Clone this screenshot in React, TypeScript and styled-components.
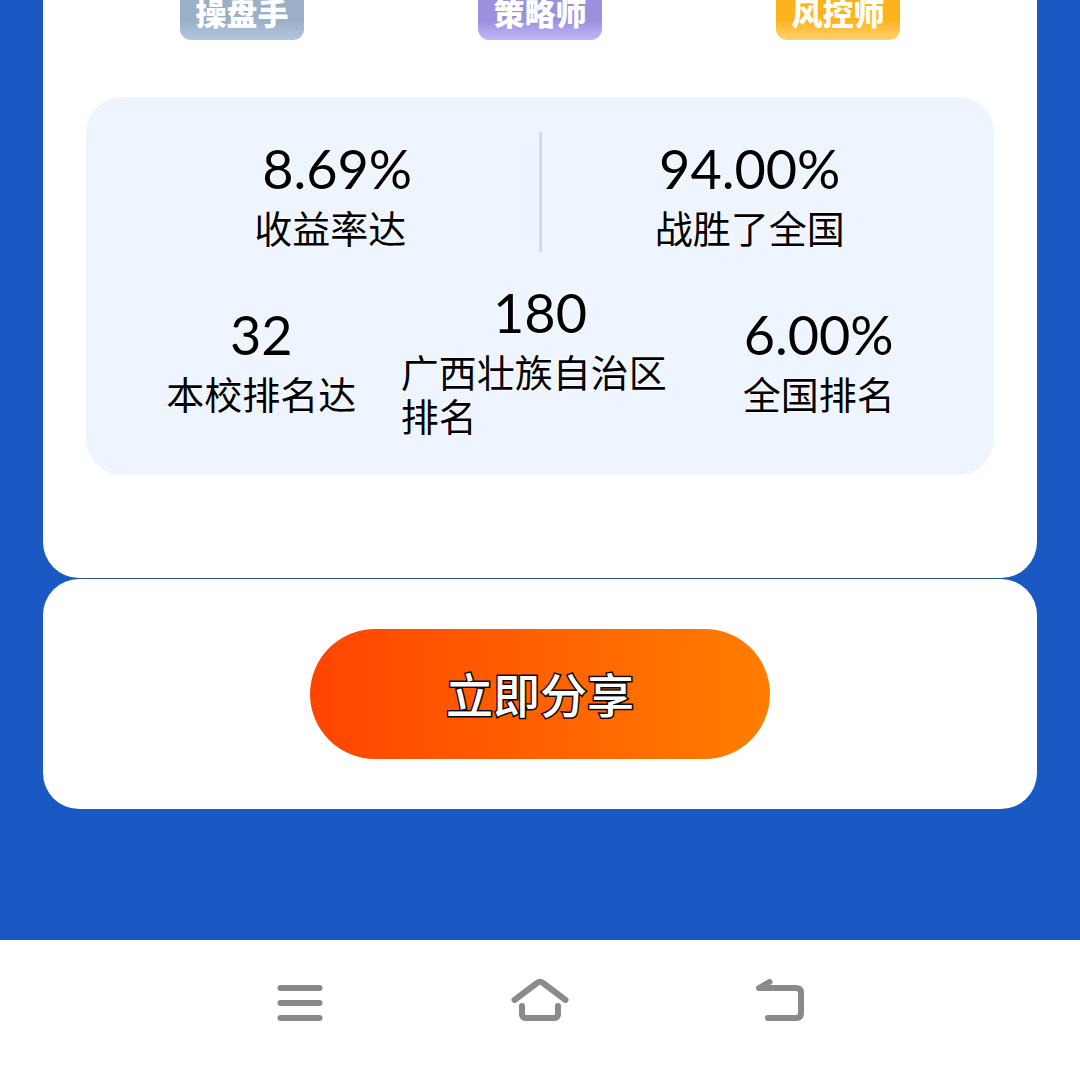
import React from "react";
import styled, { createGlobalStyle } from "styled-components";

const GlobalStyle = createGlobalStyle`
  *, *::before, *::after { box-sizing: border-box; }
  body {
    margin: 0;
    background: #fff;
    color: #000;
    font-family: Lato, "Noto Sans CJK SC", sans-serif;
  }
`;

const Page = styled.div`
  display: flex;
  flex-direction: column;
`;

const Content = styled.main`
  display: flex;
  flex-direction: column;
  padding: 0 43px 131px;
  background: #1a58c4;
`;

const ResultCard = styled.section`
  display: flex;
  flex-direction: column;
  gap: 57px;
  padding: 0 43px 103px;
  background: #fff;
  border-radius: 0 0 36px 36px;
`;

const Seam = styled.div`
  height: 1px;
  margin: 0 36px;
  background: #245a74;
`;

const ShareCard = styled.section`
  display: flex;
  justify-content: center;
  padding: 50px 36px;
  background: #fff;
  border-radius: 36px;
`;

const Badges = styled.div`
  display: grid;
  grid-template-columns: repeat(3, 1fr);
  justify-items: center;
  padding: 0 7px;
`;

const Badge = styled.span<{ $from: string; $to: string }>`
  width: 124px;
  height: 40px;
  border-radius: 0 0 11px 11px;
  background: linear-gradient(${(p) => p.$from} 50%, ${(p) => p.$to});
  color: #fff;
  font-family: "Noto Sans CJK SC", sans-serif;
  font-size: 31px;
  font-weight: 900;
  line-height: 24px;
  text-align: center;
  white-space: nowrap;
`;

const Panel = styled.div`
  display: flex;
  flex-direction: column;
  gap: 24px;
  padding: 35px 36px;
  background: #eff5ff;
  border-radius: 36px;
`;

const PairRow = styled.div`
  display: grid;
  grid-template-columns: 1fr 3px 1fr;
`;

const TripleRow = styled.div`
  display: grid;
  grid-template-columns: repeat(3, 1fr);
  align-items: center;
`;

const Divider = styled.div`
  background: #d9dadd;
`;

const StatBox = styled.div`
  display: flex;
  flex-direction: column;
  align-items: center;
  padding-bottom: 3px;
  text-shadow: 0 0 2px #fff, 0 0 2px #fff;
`;

const StatValue = styled.strong`
  font-size: 54px;
  font-weight: 400;
  line-height: 73px;
`;

const StatLabel = styled.span`
  font-family: "Noto Sans CJK SC", sans-serif;
  font-size: 38px;
  line-height: 44px;
`;

const ShareButton = styled.button`
  width: 460px;
  max-width: 100%;
  height: 130px;
  padding: 0 0 2px;
  border: 0;
  border-radius: 65px;
  background: linear-gradient(90deg, #ff4400, #ff7e00);
  color: #fff;
  font-family: "Noto Sans CJK SC", sans-serif;
  font-size: 47px;
  font-weight: 500;
  line-height: 64px;
  -webkit-text-stroke: 3px #0a0a14;
  paint-order: stroke fill;
  cursor: pointer;
`;

const NavBar = styled.nav`
  display: grid;
  grid-template-columns: repeat(3, 1fr);
  justify-items: center;
  align-items: center;
  height: 126px;
  padding: 0 calc(100% / 6);
  background: #fff;
`;

const NavButton = styled.button`
  display: flex;
  padding: 0;
  border: 0;
  background: none;
  color: #8a8a8a;
  cursor: pointer;
`;

const icons = [
  { name: "菜单", d: "M10.500 18H49.500M10.500 33H49.500M10.500 48H49.500" },
  { name: "主页", d: "M4.500 30L27 13Q30 10.500 33 13L55.500 30M12 36V43.500Q12 48 16.500 48H43.500Q48 48 48 43.500V36" },
  { name: "返回", d: "M19.500 12L9 18H46Q51 18 51 23V43Q51 48 46 48H18" },
];

const badges = [
  { text: "操盘手", from: "#9bafc7", to: "#b3c6e0" },
  { text: "策略师", from: "#9a90dc", to: "#c3b6fa" },
  { text: "风控师", from: "#fdb31c", to: "#fdd272" },
];

function Stat({ value, label }: { value: string; label: string }) {
  return (
    <StatBox>
      <StatValue>{value}</StatValue>
      <StatLabel>{label}</StatLabel>
    </StatBox>
  );
}

export default function App() {
  return (
    <Page>
      <GlobalStyle />
      <Content>
        <ResultCard>
          <Badges>
            {badges.map((b) => (
              <Badge key={b.text} $from={b.from} $to={b.to}>
                {b.text}
              </Badge>
            ))}
          </Badges>
          <Panel>
            <PairRow>
              <Stat value={"\u00a08.69%"} label="收益率达" />
              <Divider />
              <Stat value="94.00%" label="战胜了全国" />
            </PairRow>
            <TripleRow>
              <Stat value="32" label="本校排名达" />
              <Stat value="180" label="广西壮族自治区排名" />
              <Stat value="6.00%" label="全国排名" />
            </TripleRow>
          </Panel>
        </ResultCard>
        <Seam />
        <ShareCard>
          <ShareButton type="button">立即分享</ShareButton>
        </ShareCard>
      </Content>
      <NavBar>
        {icons.map((icon) => (
          <NavButton key={icon.name} type="button" aria-label={icon.name}>
            <svg
              width="60"
              height="66"
              viewBox="0 0 60 66"
              fill="none"
              stroke="currentColor"
              strokeWidth="6"
              strokeLinecap="round"
              strokeLinejoin="round"
            >
              <path d={icon.d} />
            </svg>
          </NavButton>
        ))}
      </NavBar>
    </Page>
  );
}
